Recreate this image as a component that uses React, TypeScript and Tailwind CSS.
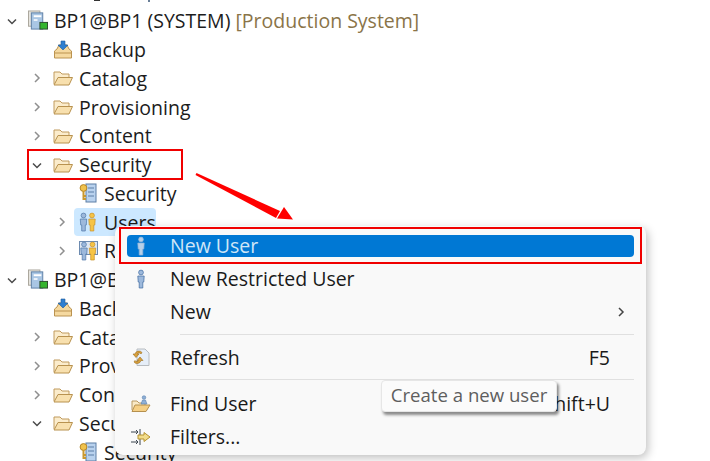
import type { ReactNode } from 'react';

const FONT = "font-['Open_Sans','Noto_Sans',sans-serif]";

function Chevron({ open }: { open?: boolean }) {
  return (
    <svg width="12" height="12" viewBox="0 0 12 12" fill="none" strokeWidth="1.5" stroke={open ? '#4a4a4a' : '#8f8f8f'}>
      {open ? <path d="M2 4.5 L6 8.5 L10 4.5" /> : <path d="M4 2 L8 6 L4 10" />}
    </svg>
  );
}

function ServerIcon() {
  return (
    <svg width="21" height="21" viewBox="0 0 21 21">
      <rect x="0.5" y="0.5" width="12" height="16" fill="#e6e4de" stroke="#a8a49a" />
      <rect x="3.5" y="2.5" width="12" height="17" fill="#a9c6e4" stroke="#5d7fa6" />
      <rect x="6" y="5" width="8" height="2" fill="#fff" />
      <rect x="6" y="9" width="4" height="2" fill="#eef4fa" />
      <rect x="12.5" y="12.5" width="8" height="7" fill="#35b52f" stroke="#2c4a2c" />
    </svg>
  );
}

function BackupIcon() {
  return (
    <svg width="20" height="20" viewBox="0 0 20 20">
      <path d="M4 9 L6 5 H14 L16 9 L18.5 11 V18 H1.5 V11 Z" fill="#f5d9a0" stroke="#bb9350" />
      <path d="M2 13 H18" stroke="#bb9350" />
      <path d="M8 1 H12 V5 H15 L10 10 L5 5 H8 Z" fill="#2e7fd0" stroke="#1e5a9c" strokeWidth="0.6" />
    </svg>
  );
}

function FolderIcon() {
  return (
    <svg width="20" height="16" viewBox="0 0 20 16">
      <path d="M1 14 V2 H7 L9 4 H16 V7" fill="#fbeccc" stroke="#c09a5c" />
      <path d="M1 15 L5 7.5 H19.5 L16 15 Z" fill="#f8e0ae" stroke="#b8924f" />
    </svg>
  );
}

function KeysIcon() {
  return (
    <svg width="18" height="20" viewBox="0 0 18 20">
      <rect x="7" y="1" width="10" height="18" fill="#b9d2ee" stroke="#5d7fa6" />
      <path d="M9 5 H15 M9 9 H15 M9 13 H15" stroke="#5d7fa6" />
      <circle cx="4.5" cy="5" r="3.4" fill="#f0c24c" stroke="#b5862a" />
      <path d="M4.5 8 V17 M4.5 13 H7 M4.5 16 H7" stroke="#c9982f" strokeWidth="2" />
    </svg>
  );
}

function Person({ x, body, edge }: { x: number; body: string; edge: string }) {
  return (
    <g>
      <circle cx={x} cy="3.5" r="2.4" fill={body} stroke={edge} strokeWidth="0.7" />
      <path d={`M${x - 3.2} 7 H${x + 3.2} L${x + 2.8} 13 H${x + 1.8} V19 H${x - 1.8} V13 H${x - 2.8} Z`} fill={body} stroke={edge} strokeWidth="0.7" />
    </g>
  );
}

function UsersIcon() {
  return (
    <svg width="18" height="20" viewBox="0 0 18 20">
      <Person x={4.5} body="#9db9dc" edge="#4f77a8" />
      <Person x={13} body="#f6c445" edge="#c9922a" />
    </svg>
  );
}

function RolesIcon() {
  return (
    <svg width="19" height="20" viewBox="0 0 19 20">
      <rect x="0.5" y="0.5" width="18" height="13" fill="#dfe8f3" stroke="#6d8bb0" />
      <Person x={5} body="#9db9dc" edge="#4f77a8" />
      <Person x={13.5} body="#f6c445" edge="#c9922a" />
    </svg>
  );
}

function UserIcon({ selected }: { selected?: boolean }) {
  return (
    <svg width="12" height="20" viewBox="0 0 12 20">
      <Person x={6} body={selected ? '#b6cfe8' : '#9db9dc'} edge={selected ? '#8fb3d8' : '#3f6aa0'} />
    </svg>
  );
}

function RefreshIcon() {
  return (
    <svg width="18" height="19" viewBox="0 0 18 19">
      <path d="M5 1 H13 L17 5 V17.5 H5 Z" fill="#e6eef8" stroke="#b8bcc0" />
      <path d="M10 4.5 A4 4 0 0 0 3 6 L1 6 L4 9.5 L7 6 L5.2 6 A2.2 2.2 0 0 1 9 6 Z" fill="#d9a03c" stroke="#9a6f22" strokeWidth="0.6" />
      <path d="M2 14 A4 4 0 0 0 9 12.5 L11 12.5 L8 9 L5 12.5 L6.8 12.5 A2.2 2.2 0 0 1 3 12.5 Z" fill="#d9a03c" stroke="#9a6f22" strokeWidth="0.6" />
    </svg>
  );
}

function FindIcon() {
  return (
    <svg width="20" height="18" viewBox="0 0 20 18">
      <path d="M1 15 V6 H6 L8 8 H14 V10" fill="#f9e9c6" stroke="#b99a62" />
      <path d="M1 16.5 L4 10 H19 L15 16.5 Z" fill="#f5cf85" stroke="#b5904f" />
      <circle cx="13" cy="2.5" r="1.8" fill="#8fb0d6" stroke="#4f77a8" strokeWidth="0.5" />
      <path d="M10 9 L11.5 5 H14.5 L16 9 Z" fill="#8fb0d6" stroke="#4f77a8" strokeWidth="0.5" />
    </svg>
  );
}

function FiltersIcon() {
  return (
    <svg width="20" height="18" viewBox="0 0 20 18" fill="none">
      <path d="M0 4 H7 M5 2 L7 4 L5 6 M9 1 V7 M0 14 H7 M5 12 L7 14 L5 16 M9 11 V17" stroke="#3d4650" />
      <path d="M7 7 H13 V4.5 L19 9 L13 13.5 V11 H7 Z" fill="#f2dc8a" stroke="#b5912f" />
    </svg>
  );
}

type RowProps = {
  level: 0 | 1 | 2;
  chevron?: 'open' | 'closed';
  icon: ReactNode;
  children: ReactNode;
  highlighted?: boolean;
};

function TreeRow({ level, chevron, icon, children, highlighted }: RowProps) {
  const indent = level === 0 ? 'pl-0' : level === 1 ? 'pl-[25px]' : 'pl-[50px]';
  return (
    <div className={`flex h-[28.75px] items-center whitespace-nowrap ${indent}`}>
      <span className="flex w-6 shrink-0 justify-center">{chevron && <Chevron open={chevron === 'open'} />}</span>
      <span className={`flex h-[28px] items-center rounded-sm ${highlighted ? 'bg-[#cce8ff]' : ''}`}>
        <span className="ml-[4px] flex w-[20px] justify-center">{icon}</span>
        <span className="ml-[6px]">{children}</span>
      </span>
    </div>
  );
}

function ServerBlock({ label, tag }: { label: string; tag?: boolean }) {
  return (
    <TreeRow level={0} chevron="open" icon={<ServerIcon />}>
      {label} {tag && <span className="text-[#8a7448]">[Production System]</span>}
    </TreeRow>
  );
}

function MenuItem({ icon, label, shortcut, arrow, selected }: { icon?: ReactNode; label: string; shortcut?: string; arrow?: boolean; selected?: boolean }) {
  return (
    <div className={`flex items-center rounded-[4px] ${selected ? 'h-[22px] bg-[#0078d4] text-[#cfe6f7]' : 'h-[33px] text-[#1a1a1a]'}`}>
      <span className="flex w-[43px] justify-center pr-[15px]">{icon}</span>
      <span>{label}</span>
      {shortcut && <span className="ml-auto mr-[24px]">{shortcut}</span>}
      {arrow && (
        <svg className="ml-auto mr-[8px]" width="10" height="12" viewBox="0 0 10 12" fill="none" stroke="#444" strokeWidth="1.5">
          <path d="M3 2 L7 6 L3 10" />
        </svg>
      )}
    </div>
  );
}

export default function App() {
  return (
    <div className={`relative h-[461px] w-[710px] overflow-hidden bg-white text-[19.5px] text-[#1c1c1c] ${FONT}`}>
      {/* bits of the row scrolled off the top */}
      <span className="absolute left-[94px] top-0 h-[1px] w-[6px] bg-[#333]" />
      <span className="absolute left-[148px] top-0 h-[2px] w-[2px] bg-[#6a7f98]" />

      <div className="pt-[6.6px]">
        <ServerBlock label="BP1@BP1 (SYSTEM)" tag />
        <TreeRow level={1} icon={<BackupIcon />}>Backup</TreeRow>
        <TreeRow level={1} chevron="closed" icon={<FolderIcon />}>Catalog</TreeRow>
        <TreeRow level={1} chevron="closed" icon={<FolderIcon />}>Provisioning</TreeRow>
        <TreeRow level={1} chevron="closed" icon={<FolderIcon />}>Content</TreeRow>
        <TreeRow level={1} chevron="open" icon={<FolderIcon />}>Security</TreeRow>
        <TreeRow level={2} icon={<KeysIcon />}>Security</TreeRow>
        <TreeRow level={2} chevron="closed" icon={<UsersIcon />} highlighted>Users</TreeRow>
        <TreeRow level={2} chevron="closed" icon={<RolesIcon />}>Roles</TreeRow>
        <ServerBlock label="BP1@BP1 (SYSTEM)" />
        <TreeRow level={1} icon={<BackupIcon />}>Backup</TreeRow>
        <TreeRow level={1} chevron="closed" icon={<FolderIcon />}>Catalog</TreeRow>
        <TreeRow level={1} chevron="closed" icon={<FolderIcon />}>Provisioning</TreeRow>
        <TreeRow level={1} chevron="closed" icon={<FolderIcon />}>Content</TreeRow>
        <TreeRow level={1} chevron="open" icon={<FolderIcon />}>Security</TreeRow>
        <TreeRow level={2} icon={<KeysIcon />}>Security</TreeRow>
      </div>

      {/* context menu */}
      <div className="absolute left-[115px] top-[226px] h-[229px] w-[531px] rounded-lg bg-[#f9f9f9] px-[12px] pt-[9px] shadow-[2px_3px_10px_rgba(0,0,0,0.25)]">
        <MenuItem selected icon={<UserIcon selected />} label="New User" />
        <div className="mt-[5px]">
          <MenuItem icon={<UserIcon />} label="New Restricted User" />
        </div>
        <MenuItem label="New" arrow />
        <div className="mb-[6px] mt-[6px] ml-[53px] border-t border-[#e0e0e0]" />
        <MenuItem icon={<RefreshIcon />} label="Refresh" shortcut="F5" />
        <div className="mb-[7px] mt-[5px] ml-[53px] border-t border-[#e0e0e0]" />
        <MenuItem icon={<FindIcon />} label="Find User" shortcut="Ctrl+Shift+U" />
        <MenuItem icon={<FiltersIcon />} label="Filters..." />
      </div>

      {/* tooltip */}
      <div className="absolute left-[381px] top-[380px] flex h-[32px] w-[176px] items-center justify-center rounded-[4px] border border-[#e6e6e6] bg-[#fbfbfb] pb-[2px] text-[18.6px] text-[#5e5e5e] shadow-[2px_3px_3px_rgba(0,0,0,0.45)]">
        Create a new user
      </div>

      {/* red annotations */}
      <div className="absolute left-[27px] top-[149px] h-[31px] w-[156px] border-2 border-[#f00000]" />
      <div className="absolute left-[119px] top-[227px] h-[37px] w-[523px] border-2 border-[#f00000]" />
      <svg className="absolute left-[190px] top-[165px]" width="115" height="65" viewBox="0 0 115 65">
        <path d="M6.5 8 L90 46 L86 53 L5.5 10 Z" fill="#ff0000" />
        <path d="M103 54.5 L87 53.5 L94 42 Z" fill="#ff0000" />
      </svg>
    </div>
  );
}
